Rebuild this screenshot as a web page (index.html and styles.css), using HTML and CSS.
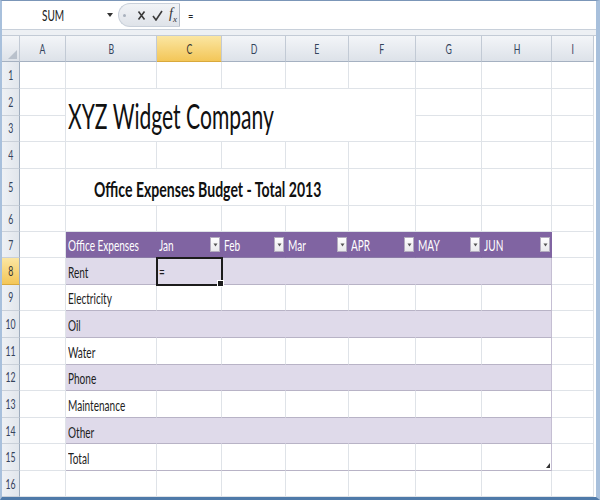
FILE: index.html
```html
<!DOCTYPE html>
<html lang="en">
<head>
    <meta charset="UTF-8">
    <title>Office Expenses Budget</title>
    <link rel="stylesheet" href="styles.css">
</head>
<body>

    <div class="window">
        <div class="formula-bar">
            <div class="name-box">
                <span class="t">SUM</span>
                <svg class="name-arrow" width="6" height="4" viewBox="0 0 6 4"><path d="M0 0h6L3 4z" fill="#333"/></svg>
            </div>
            <div class="fx-pill">
                <span class="grip"></span>
                <svg width="9" height="11" viewBox="0 0 9 11"><path d="M1.5 1.5l6 8M7.5 1.5l-6 8" stroke="#3a3a3a" stroke-width="1.6" fill="none"/></svg>
                <svg width="11" height="11" viewBox="0 0 11 11"><path d="M1 6l3 4 6-9" stroke="#3a3a3a" stroke-width="1.6" fill="none"/></svg>
                <span class="fx"><i>f</i><sub>x</sub></span>
            </div>
            <div class="formula"><span class="t">=</span></div>
        </div>
        <div class="gap"></div>
        <div class="sheet" id="sheet"></div>
    </div>

    <script>
        const sheet = document.getElementById("sheet");
        const cols = ["A", "B", "C", "D", "E", "F", "G", "H", "I"];
        const heads = ["Office Expenses", "Jan", "Feb", "Mar", "APR", "MAY", "JUN"];
        const items = ["Rent", "Electricity", "Oil", "Water", "Phone", "Maintenance", "Other", "Total"];

        function cell(cls, text) {
            const d = document.createElement("div");
            d.className = cls;
            if (text) {
                const s = document.createElement("span");
                s.className = "t";
                s.textContent = text;
                d.appendChild(s);
            }
            sheet.appendChild(d);
            return d;
        }

        function dropdown(parent) {
            const b = document.createElement("span");
            b.className = "dd";
            b.innerHTML = '<svg width="5" height="4" viewBox="0 0 5 4"><path d="M0.5 0.5h4L2.5 3.5z" fill="#555"/></svg>';
            parent.appendChild(b);
        }

        // column headers
        cell("corner");
        cols.forEach((c, i) => cell(i === 2 ? "ch hi" : "ch", c));

        for (let r = 1; r <= 16; r++) {
            cell(r === 8 ? "rh hi" : "rh", String(r));

            for (let c = 0; c < cols.length; c++) {
                // merged B2:F3 and B5:E5
                if (r === 2 && c === 1) { cell("c title", "XYZ Widget Company"); continue; }
                if ((r === 2 || r === 3) && c >= 1 && c <= 5) continue;
                if (r === 5 && c === 1) { cell("c subtitle", "Office Expenses Budget - Total 2013"); continue; }
                if (r === 5 && c >= 2 && c <= 4) continue;

                const inTable = c >= 1 && c <= 7;

                if (r === 7 && inTable) {
                    dropdown(cell("c th", heads[c - 1]));
                    continue;
                }

                if (r >= 8 && r <= 15 && inTable) {
                    let cls = "c tb";
                    if (r % 2 === 0) cls += " band";
                    if (c === 7) cls += " edge";
                    if (r === 8 && c === 2) cls += " sel";
                    if (r === 15 && c === 7) cls += " resize";
                    let text = c === 1 ? items[r - 8] : "";
                    if (r === 8 && c === 2) text = "=";
                    cell(cls, text);
                    continue;
                }

                cell("c");
            }
        }
    </script>

</body>
</html>
```

FILE: styles.css
```css
* {
    margin: 0;
    padding: 0;
    box-sizing: border-box;
}

body {
    font-family: Lato, "Open Sans", sans-serif;
    background: #fff;
}

.window {
    width: 600px;
    height: 500px;
    display: flex;
    flex-direction: column;
    overflow: hidden;
    background: #fff;
    border-top: 1px solid #7b96b8;
    border-left: 2px solid #a8c0dc;
    border-right: 4px solid #a8c0dc;
    border-bottom: 3px solid #4f7aa9;
}

/* squeezed text, the picture is narrow */
.t {
    display: inline-block;
    white-space: nowrap;
    transform: scaleX(0.67);
    transform-origin: left center;
}

/* formula bar */
.formula-bar {
    height: 29px;
    display: flex;
    align-items: center;
    border-bottom: 1px solid #c8d0da;
    background: #fff;
}

.name-box {
    width: 116px;
    height: 100%;
    display: flex;
    align-items: center;
    justify-content: space-between;
    padding: 0 5px 0 40px;
    font-size: 15px;
    color: #222;
}

.fx-pill {
    width: 62px;
    height: 24px;
    display: flex;
    align-items: center;
    gap: 6px;
    padding-left: 4px;
    background: linear-gradient(#f1f3f6, #dfe3e9);
    border: 1px solid #c9d0da;
    border-right: 1px solid #b4bcc8;
    border-radius: 12px 0 0 12px;
}

.grip {
    width: 3px;
    height: 3px;
    margin-right: 5px;
    border-radius: 50%;
    background: #a9b1bd;
}

.fx {
    font-family: "Liberation Serif", serif;
    font-size: 14px;
    color: #333;
    line-height: 1;
}

.fx sub {
    font-size: 9px;
    font-style: italic;
}

.formula {
    padding-left: 8px;
    font-size: 14px;
    color: #222;
}

.gap {
    height: 6px;
    background: #edf0f4;
    border-bottom: 1px solid #c3cbd6;
}

/* sheet grid */
.sheet {
    flex: 1;
    display: grid;
    grid-template-columns: 18px 46px 91px 65px 64px 63px 67px 66px 70px 42px;
    grid-template-rows: 26px repeat(4, 26.75px) 37px 26px 26px repeat(8, 26.625px) 26px;
    font-size: 15px;
    color: #1e1e1e;
}

.corner,
.ch,
.rh {
    display: flex;
    align-items: center;
    justify-content: center;
    font-size: 13px;
    color: #34435c;
    background: linear-gradient(#f3f5f8, #dde2e9);
    border-right: 1px solid #c2cad5;
    border-bottom: 1px solid #a5b1c1;
}

.corner {
    position: relative;
}

.corner::after {
    content: "";
    position: absolute;
    right: 2px;
    bottom: 2px;
    border-left: 9px solid transparent;
    border-bottom: 9px solid #b9c1cc;
}

.ch .t,
.rh .t {
    transform-origin: center;
}

.rh {
    background: linear-gradient(90deg, #eef1f5, #e1e6ec);
    border-right: 1px solid #9eacbd;
    border-bottom: 1px solid #c9d0d9;
}

.ch.hi,
.rh.hi {
    background: linear-gradient(#fbe6a2, #f3c658);
    color: #333;
    border-bottom-color: #d9a93c;
}

.c {
    position: relative;
    display: flex;
    align-items: center;
    padding: 2px 0 0 2px;
    white-space: nowrap;
    border-right: 1px solid #dfe3e8;
    border-bottom: 1px solid #dfe3e8;
}

.title {
    grid-column: span 5;
    grid-row: span 2;
    font-size: 34px;
    color: #111;
    padding-top: 0;
}

.title .t {
    transform: scaleX(0.62);
}

.subtitle {
    grid-column: span 4;
    justify-content: center;
    font-size: 21px;
    font-weight: bold;
    color: #111;
}

.subtitle .t {
    transform-origin: center;
}

/* table */
.th {
    justify-content: space-between;
    padding: 0 1px 0 2px;
    color: #fff;
    background: #8064a2;
    border-right: 1px solid #8064a2;
    border-bottom: 1px solid #8a7aa6;
}

.dd {
    width: 10px;
    height: 15px;
    display: flex;
    align-items: center;
    justify-content: center;
    background: linear-gradient(#ffffff, #e9e9ec);
    border: 1px solid #b3acbf;
}

.tb {
    border-bottom: 1px solid #b8b3c6;
}

.tb.band {
    background: #dfdaea;
    border-right-color: #dfdaea;
}

.tb.edge {
    border-right: 1px solid #c5bfd3;
}

.sel {
    z-index: 2;
    outline: 2px solid #1c1c1c;
    outline-offset: -1px;
}

.sel::after {
    content: "";
    position: absolute;
    right: -3px;
    bottom: -3px;
    width: 5px;
    height: 5px;
    background: #1c1c1c;
    border: 1px solid #fff;
}

.resize::after {
    content: "";
    position: absolute;
    right: 1px;
    bottom: 2px;
    border-left: 4px solid transparent;
    border-bottom: 5px solid #333;
}
```
